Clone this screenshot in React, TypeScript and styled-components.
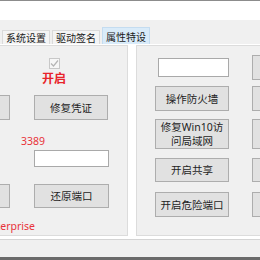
import React from 'react';
import styled, { createGlobalStyle } from 'styled-components';

const GlobalStyle = createGlobalStyle`
  html, body {
    margin: 0;
    padding: 0;
    width: 260px;
    height: 260px;
    overflow: hidden;
    background: #ffffff;
  }
  * { box-sizing: border-box; }
`;

const FONT = `"Noto Sans", "Noto Sans CJK SC", sans-serif`;

const Window = styled.div`
  width: 260px;
  height: 260px;
  display: flex;
  flex-direction: column;
  border-top: 1px solid #8c8c8c;
  font-family: ${FONT};
  overflow: hidden;
`;

const TopBlank = styled.div`
  height: 19px;
  background: #ffffff;
`;

const TabStrip = styled.div`
  height: 24px;
  background: #f0f0f0;
  display: flex;
  align-items: flex-end;
  gap: 2px;
  padding-left: 2px;
`;

const Tab = styled.div<{ $active?: boolean }>`
  height: ${(p) => (p.$active ? 17 : 14)}px;
  padding: 0 3px;
  display: flex;
  align-items: center;
  font-size: 10px;
  color: #1a1a1a;
  background: ${(p) => (p.$active ? '#d9ebf9' : '#f4f4f4')};
  border: 1px solid ${(p) => (p.$active ? '#c4dcf0' : '#dadada')};
  border-bottom: none;
  white-space: nowrap;
`;

const TabPage = styled.div`
  height: 196px;
  background: #ffffff;
  display: flex;
  gap: 8px;
  padding: 1px 0 3px;
  border-bottom: 1px solid #d4d4d4;
`;

const Panel = styled.div<{ $w: number; $open?: boolean }>`
  width: ${(p) => p.$w}px;
  flex-shrink: 0;
  background: #f0f0f0;
  border: 1px solid #dcdcdc;
  border-left: ${(p) => (p.$open ? 'none' : '1px solid #dcdcdc')};
  overflow: hidden;
`;

const Grid = styled.div<{ $cols: string; $shift: number; $gap: number }>`
  display: grid;
  grid-template-columns: ${(p) => p.$cols};
  column-gap: ${(p) => p.$gap}px;
  margin-left: ${(p) => p.$shift}px;
  align-items: center;
`;

const Row = styled.div<{ $mt: number; $h: number }>`
  display: contents;
  & > * {
    margin-top: ${(p) => p.$mt}px;
    height: ${(p) => p.$h}px;
  }
`;

const Button = styled.div`
  background: #e1e1e1;
  border: 1px solid #adadad;
  display: flex;
  align-items: center;
  justify-content: center;
  text-align: center;
  font-size: 10.5px;
  line-height: 14px;
  color: #1e1e1e;
  white-space: nowrap;
`;

const TextBox = styled.div<{ $h: number; $w: number }>`
  height: ${(p) => p.$h}px !important;
  width: ${(p) => p.$w}px;
  justify-self: end;
  background: #ffffff;
  border: 1px solid #a9a9a9;
`;

const Status = styled.div`
  display: flex;
  flex-direction: column;
  align-items: center;
  gap: 2px;
  margin: 12px 0 0 42px;
  width: 24px;
`;

const Check = styled.div`
  width: 11px;
  height: 11px;
  border: 1px solid #c8c8c8;
  background: #f7f7f7;
  display: flex;
  align-items: center;
  justify-content: center;
`;

const OnText = styled.div`
  font-size: 12px;
  font-weight: 700;
  color: #e8232a;
  line-height: 15px;
`;

const Port = styled.div`
  font-size: 10.5px;
  line-height: 14px;
  color: #e8333a;
  margin: 14px 0 0 21px;
`;

const Edition = styled.div`
  width: 35px;
  display: flex;
  justify-content: flex-end;
  margin-top: 11px;
  font-size: 10.5px;
  line-height: 14px;
  color: #e8333a;
  white-space: nowrap;
`;

const StatusBar = styled.div`
  height: 17px;
  background: #f0f0f0;
`;

const BottomStrip = styled.div`
  flex: 1;
  background: #6a6a6a;
`;

export default function App() {
  return (
    <>
      <GlobalStyle />
      <Window>
        <TopBlank />
        <TabStrip>
          <Tab>系统设置</Tab>
          <Tab>驱动签名</Tab>
          <Tab $active>属性特设</Tab>
        </TabStrip>
        <TabPage>
          <Panel $w={128} $open>
            <Status>
              <Check>
                <svg width="9" height="9" viewBox="0 0 9 9">
                  <path d="M1 4.5 L3.5 7 L8 1.5" stroke="#b5b5b5" strokeWidth="1.2" fill="none" />
                </svg>
              </Check>
              <OnText>开启</OnText>
            </Status>
            <Grid $cols="60px 74px" $shift={-50} $gap={24}>
              <Row $mt={9} $h={25}>
                <Button />
                <Button>修复凭证</Button>
              </Row>
            </Grid>
            <Port>3389</Port>
            <Grid $cols="60px 75px" $shift={-50} $gap={24}>
              <Row $mt={2} $h={17}>
                <span />
                <TextBox $h={17} $w={75} />
              </Row>
              <Row $mt={17} $h={24}>
                <Button />
                <Button>还原端口</Button>
              </Row>
            </Grid>
            <Edition>
              <span>Windows 10 Enterprise</span>
            </Edition>
          </Panel>
          <Panel $w={140}>
            <Grid $cols="74px 60px" $shift={18} $gap={23}>
              <Row $mt={9} $h={25}>
                <TextBox $h={19} $w={71} />
                <Button />
              </Row>
              <Row $mt={6} $h={25}>
                <Button>操作防火墙</Button>
                <Button />
              </Row>
              <Row $mt={8} $h={30}>
                <Button>
                  修复Win10访
                  <br />
                  问局域网
                </Button>
                <Button />
              </Row>
              <Row $mt={9} $h={24}>
                <Button>开启共享</Button>
                <Button />
              </Row>
              <Row $mt={10} $h={25}>
                <Button>开启危险端口</Button>
                <Button />
              </Row>
            </Grid>
          </Panel>
        </TabPage>
        <StatusBar />
        <BottomStrip />
      </Window>
    </>
  );
}
